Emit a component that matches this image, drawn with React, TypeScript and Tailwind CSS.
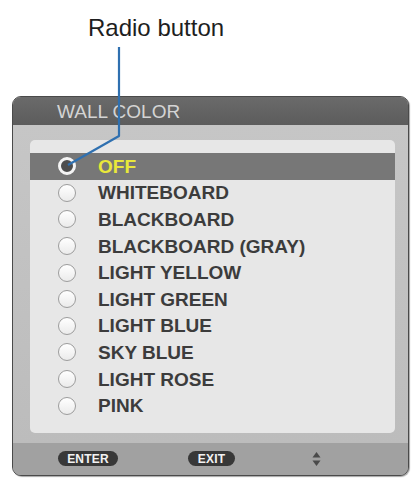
import React from "react";

const items = [
  "OFF",
  "WHITEBOARD",
  "BLACKBOARD",
  "BLACKBOARD (GRAY)",
  "LIGHT YELLOW",
  "LIGHT GREEN",
  "LIGHT BLUE",
  "SKY BLUE",
  "LIGHT ROSE",
  "PINK",
];

function Radio({ on }: { on: boolean }) {
  if (on) {
    return (
      <span className="w-[18px] h-[18px] rounded-full border-[3px] border-[#f4f4f4] bg-[#4e4e4e] shrink-0" />
    );
  }
  return (
    <span className="w-[18px] h-[18px] rounded-full border-[1.5px] border-[#9c9c9c] bg-gradient-to-b from-[#ffffff] to-[#ebebeb] shrink-0" />
  );
}

function Pill({ label, w }: { label: string; w: string }) {
  return (
    <span
      className={`${w} h-[15px] rounded-full bg-[#383838] flex items-center justify-center text-[12px] leading-none font-black text-[#f2f2f2] tracking-[0.2px]`}
    >
      {label}
    </span>
  );
}

export default function App() {
  return (
    <div
      className="relative w-[415px] h-[479px] bg-white overflow-hidden"
      style={{ fontFamily: '"Liberation Sans", Arial, sans-serif' }}
    >
      {/* caption */}
      <div className="pt-[16px] pl-[88px] text-[24px] leading-[24px] text-[#1e1e1e]">
        Radio button
      </div>

      {/* menu panel */}
      <div className="mt-[56px] ml-[12px] w-[397px] rounded-[9px] border border-[#4a4a4a] overflow-hidden bg-[#bdbdbd] shadow-[1px_1px_1px_rgba(0,0,0,0.35)]">
        <div className="h-[28px] bg-gradient-to-b from-[#6a6a6a] to-[#5c5c5c] flex items-center pl-[44px] text-[19px] leading-none text-[#d4d4d4]">
          WALL COLOR
        </div>

        <div className="pl-[17px] pr-[13px] pt-[15px] pb-[10px] bg-gradient-to-b from-[#c6c6c6] to-[#bcbcbc]">
          <div className="rounded-[5px] bg-[#e7e7e7] pt-[13px] pb-[14px]">
            {items.map((name, i) => (
              <div
                key={name}
                className={`h-[26.6px] flex items-center pl-[28px] gap-[22px] ${
                  i === 0 ? "bg-[#777777]" : ""
                }`}
              >
                <Radio on={i === 0} />
                <span
                  className={`text-[19px] leading-none font-bold ${
                    i === 0 ? "text-[#e9e83a]" : "text-[#3c3c3c]"
                  }`}
                >
                  {name}
                </span>
              </div>
            ))}
          </div>
        </div>

        <div className="h-[32px] bg-[#a1a1a1] flex items-center pl-[45px]">
          <Pill label="ENTER" w="w-[60px]" />
          <span className="ml-[70px]">
            <Pill label="EXIT" w="w-[47px]" />
          </span>
          <svg className="ml-[77px]" width="9" height="16" viewBox="0 0 9 16">
            <polygon points="4.5,1 8.5,6.5 0.5,6.5" fill="#4a4a4a" />
            <polygon points="4.5,15 8.5,9.5 0.5,9.5" fill="#4a4a4a" />
          </svg>
        </div>
      </div>

      {/* callout line */}
      <svg className="absolute inset-0 pointer-events-none" width="415" height="479">
        <polyline
          points="119,47 119,136 68,165"
          fill="none"
          stroke="#2f70b0"
          strokeWidth="2.2"
          strokeLinejoin="round"
        />
      </svg>
    </div>
  );
}
